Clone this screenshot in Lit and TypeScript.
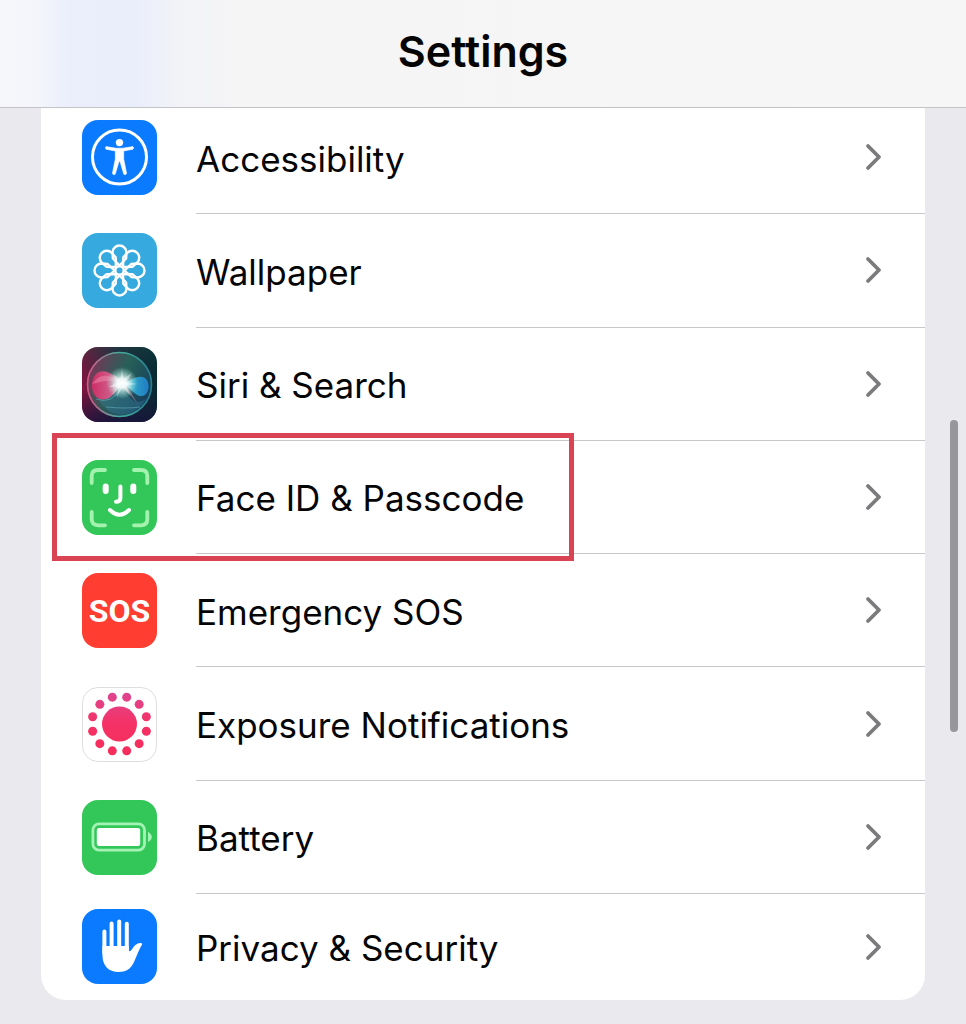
import { LitElement, html, svg, css, type TemplateResult } from "lit";
import { customElement, property } from "lit/decorators.js";

type IconName =
  | "accessibility"
  | "wallpaper"
  | "siri"
  | "faceid"
  | "sos"
  | "exposure"
  | "battery"
  | "privacy";

const tile = (fill: string) => svg`<rect width="75" height="75" rx="16" fill=${fill} />`;

const icons: Record<IconName, () => TemplateResult> = {
  accessibility: () => svg`
    ${tile("#0a7aff")}
    <circle cx="37.5" cy="37" r="27" fill="none" stroke="#fff" stroke-width="3" />
    <circle cx="37.5" cy="22.6" r="3.7" fill="#fff" />
    <path fill="#fff" stroke="#fff" stroke-width=".6" stroke-linejoin="round"
      d="M24 26.6 L34 28.2 H41 L51 26.6 Q52.2 28 51 29.2 L41.7 31 V39 L44.6 53.6 Q43.5 55.4 41.8 54.2 L38 41.4 H37 L33.2 54.2 Q31.5 55.4 30.4 53.6 L33.3 39 V31 L24 29.2 Q22.8 28 24 26.6 Z" />`,
  wallpaper: () => svg`
    ${tile("#36a9de")}
    <g transform="translate(37.5 37.5)" fill="none" stroke="#fff" stroke-width="2.4" stroke-linejoin="round">
      <circle r="4.2" />
      ${[0, 45, 90, 135, 180, 225, 270, 315].map(
        (a) => svg`<path transform="rotate(${a})" d="M0 -5 L-6.6 -12 L-7 -18 A7 7 0 0 1 7 -18 L6.6 -12 Z" />`
      )}
    </g>`,
  siri: () => svg`
    <defs>
      <linearGradient id="base" x1="0" y1="0" x2="1" y2="0">
        <stop offset="0" stop-color="#8a1442" /><stop offset=".45" stop-color="#2c2a44" /><stop offset="1" stop-color="#062b33" />
      </linearGradient>
      <linearGradient id="shade" x1="0" y1="0" x2="0" y2="1">
        <stop offset="0" stop-color="#0d4b3c" stop-opacity=".35" /><stop offset=".55" stop-color="#12182b" stop-opacity=".05" /><stop offset="1" stop-color="#16113b" stop-opacity=".8" />
      </linearGradient>
      <linearGradient id="orb" x1="0" y1=".2" x2="1" y2=".8">
        <stop offset="0" stop-color="#8c3b60" /><stop offset=".45" stop-color="#2c7564" /><stop offset="1" stop-color="#17446e" />
      </linearGradient>
      <linearGradient id="rim" x1="0" y1=".5" x2="1" y2=".5">
        <stop offset="0" stop-color="#d85686" /><stop offset=".5" stop-color="#42ad9a" /><stop offset="1" stop-color="#267f94" />
      </linearGradient>
      <linearGradient id="pink" x1="0" y1="0" x2="1" y2="0">
        <stop offset="0" stop-color="#d92c68" /><stop offset=".65" stop-color="#e0608f" /><stop offset="1" stop-color="#fff" />
      </linearGradient>
      <linearGradient id="blue" x1="0" y1="0" x2="1" y2="0">
        <stop offset="0" stop-color="#eaffff" /><stop offset=".4" stop-color="#2fb2db" /><stop offset="1" stop-color="#2185d5" />
      </linearGradient>
      <radialGradient id="glow">
        <stop offset="0" stop-color="#fff" /><stop offset=".3" stop-color="#f4ffff" stop-opacity=".9" /><stop offset="1" stop-color="#a0f0df" stop-opacity="0" />
      </radialGradient>
    </defs>
    ${tile("url(#base)")}
    ${tile("url(#shade)")}
    <circle cx="37.5" cy="37.5" r="32" fill="url(#orb)" fill-opacity=".7" stroke="url(#rim)" stroke-width="1.6" />
    <path d="M14 48 Q30 54 40 38 Q50 62 64 52 Q54 68 37 68 Q22 65 14 48 Z" fill="#35819b" fill-opacity=".4" />
    <path d="M14 52 Q30 58 40 40 M24 60 Q44 62 58 60" fill="none" stroke="#6fc0cc" stroke-opacity=".5" />
    <path d="M40 37 C32 27 24 22 17 25 C7 30 8 49 18 52 C28 55 34 44 40 37 Z" fill="url(#pink)" fill-opacity=".9" />
    <path d="M10 37 Q20 22 38 34 Q24 32 10 37 Z" fill="#f4a2bd" fill-opacity=".4" />
    <path d="M40 37 C49 34 53 29 60 30 C69 31 69 48 60 49 C53 50 49 40 40 37 Z" fill="url(#blue)" fill-opacity=".85" />
    <path d="M39 37 L56 57 L44 38 Z" fill="#f298b7" fill-opacity=".45" />
    <circle cx="40" cy="36" r="16" fill="url(#glow)" />
    <path d="M40 21 L41.2 32 L50 26 L44 35 L55 37 L44 38.4 L48 48 L40 40.5 L35 50 L36.4 40 L27 40 L35.6 35 L31 27 L38.6 32 Z" fill="#fff" fill-opacity=".4" />`,
  faceid: () => svg`
    ${tile("#33c759")}
    <path fill="none" stroke="#a3f3ae" stroke-width="3.8" stroke-linecap="round"
      d="M9.7 23 V16 Q9.7 10 16 10 H23 M52 10 H59 Q65.3 10 65.3 16 V23 M65.3 52 V59 Q65.3 65.3 59 65.3 H52 M23 65.3 H16 Q9.7 65.3 9.7 59 V52" />
    <path fill="none" stroke="#fff" stroke-width="6" stroke-linecap="round" d="M23.7 26.4 V31 M51.3 26.4 V31" />
    <path fill="none" stroke="#fff" stroke-width="4" stroke-linecap="round" d="M38.4 26.5 V38 Q38.4 41.8 34 41.8 M28 50 Q37.5 59.5 47 50" />`,
  sos: () => svg`
    ${tile("#ff3d31")}
    <text class="sos" x="37.5" y="49" text-anchor="middle" fill="#fff">SOS</text>`,
  exposure: () => svg`
    <defs>
      <linearGradient id="rose" gradientUnits="userSpaceOnUse" x1="37" y1="6" x2="37" y2="69">
        <stop offset="0" stop-color="#de4690" /><stop offset=".5" stop-color="#f53165" /><stop offset="1" stop-color="#f52d5b" />
      </linearGradient>
    </defs>
    <rect x=".5" y=".5" width="74" height="74" rx="15.5" fill="#fff" stroke="#dedede" />
    <g fill="url(#rose)">
      <circle cx="37.5" cy="37" r="17.5" />
      ${Array.from({ length: 12 }, (_, i) => {
        const a = ((15 + i * 30) * Math.PI) / 180;
        return svg`<circle cx=${37.5 + 27.8 * Math.cos(a)} cy=${37 + 27.8 * Math.sin(a)} r="4.5" />`;
      })}
    </g>`,
  battery: () => svg`
    ${tile("#33c759")}
    <rect x="10.9" y="23.9" width="51.6" height="26.2" rx="6" fill="none" stroke="#a3f3b4" stroke-width="2.8" />
    <rect x="14.8" y="28" width="43.4" height="18" rx="2.5" fill="#fff" />
    <path d="M66 31.8 Q69.8 34 69.8 37 Q69.8 40 66 42 Z" fill="#a3f3b4" />`,
  privacy: () => svg`
    ${tile("#0a7aff")}
    <path fill="none" stroke="#fff" stroke-width="4" stroke-linecap="round" d="M22.4 22.6 V44 M29.6 14.4 V42 M37.2 12.4 V42 M44.8 14.8 V42" />
    <path fill="#fff" d="M20.4 37 H46.8 V41.5 Q47.8 43.2 49.8 40.5 Q53.5 34.3 58 34 Q60.6 34 60.2 35.3 C56.8 40.5 55 47 51.8 53.5 C48.5 60.2 44 63 36.5 63 C26.5 63 20.4 56.5 20.4 46 Z" />`,
};

@customElement("settings-icon")
export class SettingsIcon extends LitElement {
  static styles = css`
    :host { display: block; flex: none; }
    .tile { display: block; width: 75px; height: 75px; }
    .sos { font: 700 32px Roboto, sans-serif; }
  `;

  @property() name: IconName = "battery";

  render() {
    return html`<svg class="tile" viewBox="0 0 75 75" aria-hidden="true">${icons[this.name]()}</svg>`;
  }
}

interface Item {
  icon: IconName;
  label: string;
  highlighted?: boolean;
}

const items: Item[] = [
  { icon: "accessibility", label: "Accessibility" },
  { icon: "wallpaper", label: "Wallpaper" },
  { icon: "siri", label: "Siri & Search" },
  { icon: "faceid", label: "Face ID & Passcode", highlighted: true },
  { icon: "sos", label: "Emergency SOS" },
  { icon: "exposure", label: "Exposure Notifications" },
  { icon: "battery", label: "Battery" },
  { icon: "privacy", label: "Privacy & Security" },
];

@customElement("app-root")
export class AppRoot extends LitElement {
  static styles = css`
    :host {
      display: flex;
      flex-direction: column;
      position: relative;
      min-height: 100vh;
      box-sizing: border-box;
      padding-bottom: 24px;
      background: #eae9ee;
      color: #050505;
      font-family: Inter, sans-serif;
    }
    .bar {
      position: sticky;
      top: 0;
      z-index: 2;
      padding: 25px 0 30px;
      border-bottom: 1px solid #c4c4c6;
      background: linear-gradient(90deg, #f6f7fa 0, #f3f5fb 40px, #ebeffc 68px, #eaeefb 135px, #f2f3f7 180px, #f5f5f6 240px, #f6f6f6 100%);
    }
    .title { margin: 0; font-size: 43px; line-height: 52px; font-weight: 600; text-align: center; }
    .list {
      flex: 1;
      display: flex;
      flex-direction: column;
      margin: -7px 41px 0;
      padding: 0;
      list-style: none;
      background: #fff;
      border-radius: 0 0 25px 25px;
    }
    .item { position: relative; display: flex; flex: 1 0 112px; }
    .item:last-child { flex: none; height: 106px; }
    .row {
      flex: 1;
      display: flex;
      align-items: center;
      gap: 39px;
      padding-left: 41px;
      color: inherit;
      text-decoration: none;
    }
    .body {
      flex: 1;
      align-self: stretch;
      display: flex;
      align-items: center;
      justify-content: space-between;
      padding-right: 43px;
      border-bottom: 1px solid #c8c8ca;
    }
    .item:last-child .body { border-bottom: none; }
    .label { font-size: 35px; line-height: 44px; padding-top: 3px; }
    .chevron { width: 17px; height: 28px; }
    .highlight {
      position: absolute;
      z-index: 1;
      top: -8px;
      bottom: -7px;
      left: 11px;
      width: 512px;
      border: 5px solid #d94354;
      pointer-events: none;
    }
    .thumb {
      position: absolute;
      z-index: 1;
      top: 420px;
      right: 8px;
      width: 8px;
      height: 312px;
      border-radius: 4px;
      background: #97969b;
    }
  `;

  render() {
    return html`
      <header class="bar"><h1 class="title">Settings</h1></header>
      <ul class="list">
        ${items.map(
          (item) => html`
            <li class="item">
              <a class="row" href="#">
                <settings-icon .name=${item.icon}></settings-icon>
                <span class="body">
                  <span class="label">${item.label}</span>
                  <svg class="chevron" viewBox="0 0 17 28" aria-hidden="true">
                    <path d="M3 3 L14 14 L3 25" fill="none" stroke="#7b7b7e" stroke-width="3.8" stroke-linecap="round" stroke-linejoin="round" />
                  </svg>
                </span>
              </a>
              ${item.highlighted ? html`<span class="highlight"></span>` : null}
            </li>
          `
        )}
      </ul>
      <div class="thumb"></div>
    `;
  }
}
